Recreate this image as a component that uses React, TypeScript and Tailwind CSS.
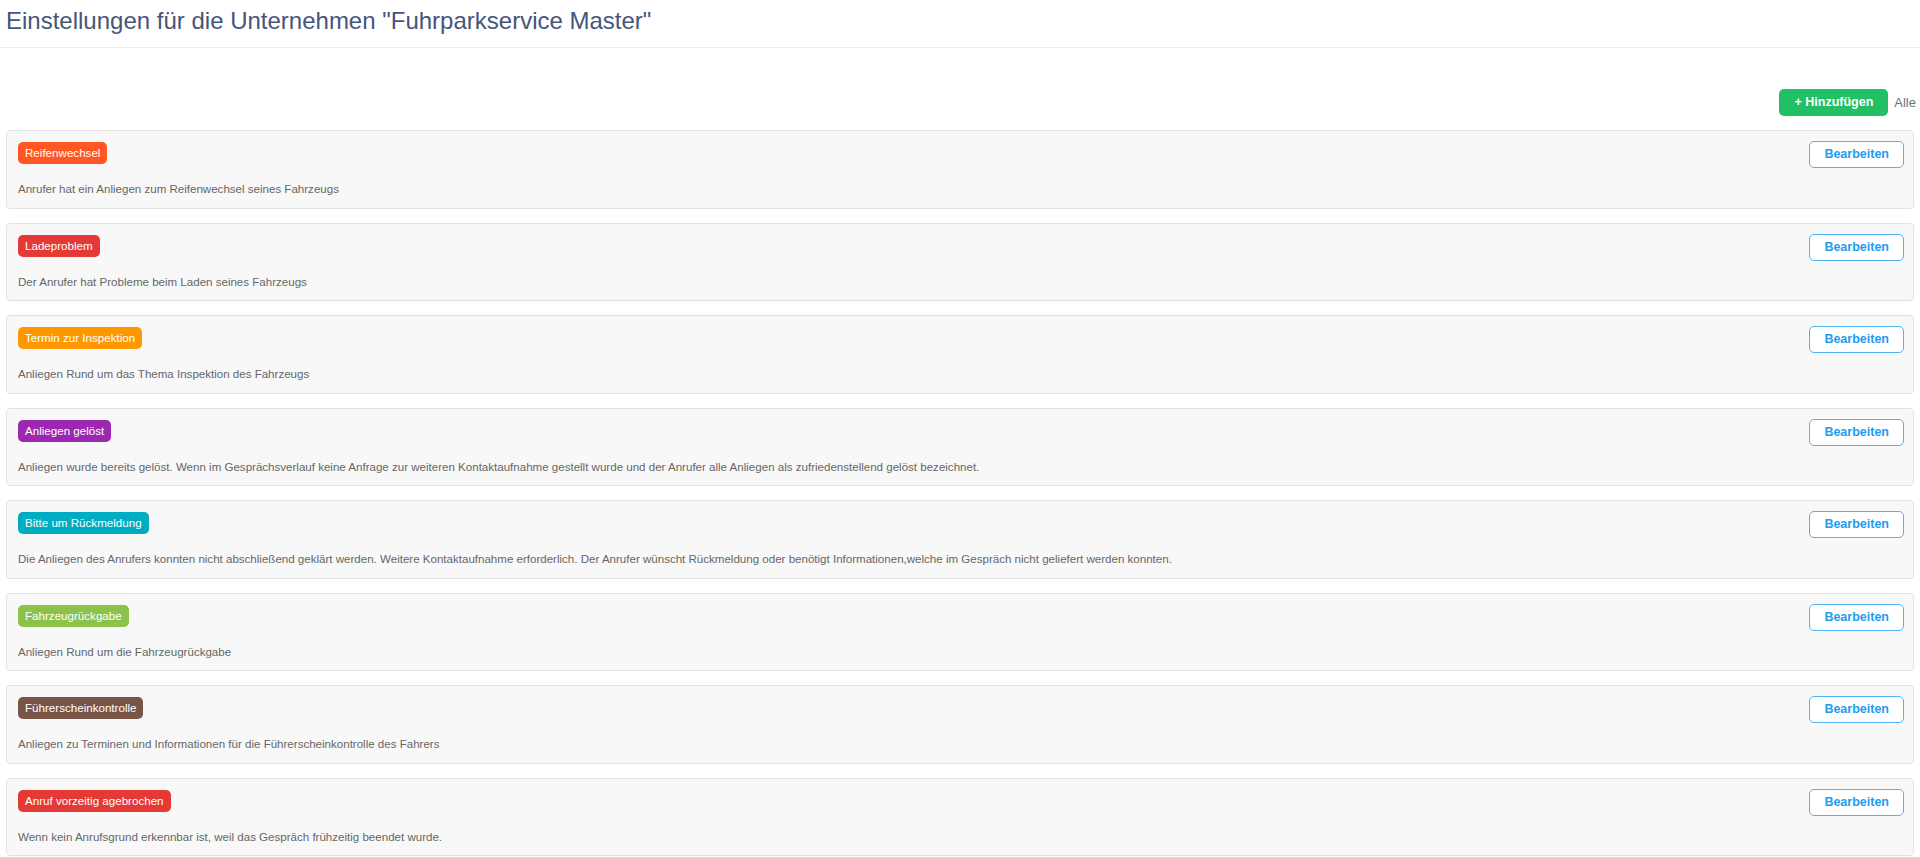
import React from 'react';

type Reason = { label: string; color: string; text: string };

const reasons: Reason[] = [
  { label: 'Reifenwechsel', color: 'bg-[#ff5722]', text: 'Anrufer hat ein Anliegen zum Reifenwechsel seines Fahrzeugs' },
  { label: 'Ladeproblem', color: 'bg-[#e53935]', text: 'Der Anrufer hat Probleme beim Laden seines Fahrzeugs' },
  { label: 'Termin zur Inspektion', color: 'bg-[#ff9800]', text: 'Anliegen Rund um das Thema Inspektion des Fahrzeugs' },
  {
    label: 'Anliegen gelöst',
    color: 'bg-[#9c27b0]',
    text: 'Anliegen wurde bereits gelöst. Wenn im Gesprächsverlauf keine Anfrage zur weiteren Kontaktaufnahme gestellt wurde und der Anrufer alle Anliegen als zufriedenstellend gelöst bezeichnet.',
  },
  {
    label: 'Bitte um Rückmeldung',
    color: 'bg-[#00acc1]',
    text: 'Die Anliegen des Anrufers konnten nicht abschließend geklärt werden. Weitere Kontaktaufnahme erforderlich. Der Anrufer wünscht Rückmeldung oder benötigt Informationen,welche im Gespräch nicht geliefert werden konnten.',
  },
  { label: 'Fahrzeugrückgabe', color: 'bg-[#8bc34a]', text: 'Anliegen Rund um die Fahrzeugrückgabe' },
  { label: 'Führerscheinkontrolle', color: 'bg-[#795548]', text: 'Anliegen zu Terminen und Informationen für die Führerscheinkontrolle des Fahrers' },
  { label: 'Anruf vorzeitig agebrochen', color: 'bg-[#e53935]', text: 'Wenn kein Anrufsgrund erkennbar ist, weil das Gespräch frühzeitig beendet wurde.' },
];

const ReasonCard = ({ reason }: { reason: Reason }) => (
  <div className="rounded-[4px] border border-[#e2e2e2] bg-[#f8f8f8] pl-[11px] pr-[9px] pt-[10px] pb-[9.5px]">
    <div className="flex items-start justify-between">
      <span className={`mt-[1px] rounded-[5px] px-[7px] text-[11.6px] leading-[22px] text-white ${reason.color}`}>
        {reason.label}
      </span>
      <button className="h-[27px] rounded-[5px] border border-[#4fb3f6] bg-white px-[14px] text-[12.5px] font-bold text-[#1e9cf0]">
        Bearbeiten
      </button>
    </div>
    <p className="mt-[13px] text-[11.55px] leading-[17px] text-[#666]">{reason.text}</p>
  </div>
);

export default function App() {
  return (
    <div className="min-h-screen bg-white font-['Liberation_Sans',Arial,sans-serif]">
      <header className="h-[48px] border-b border-[#ececec] pl-[6px] pt-[7px]">
        <h1 className="text-[24px] leading-[28px] text-[#46557a]">
          Einstellungen für die Unternehmen "Fuhrparkservice Master"
        </h1>
      </header>

      <div className="flex items-center justify-end pt-[41px] pr-[4px]">
        <button className="h-[27px] rounded-[5px] bg-[#21c065] px-[15px] text-[12.5px] font-bold text-white">
          + Hinzufügen
        </button>
        <span className="ml-[6px] text-[13px] text-[#6b7280]">Alle</span>
      </div>

      <div className="flex flex-col gap-[14px] px-[6px] pt-[14px] pb-4">
        {reasons.map((r) => (
          <ReasonCard key={r.label} reason={r} />
        ))}
      </div>
    </div>
  );
}
